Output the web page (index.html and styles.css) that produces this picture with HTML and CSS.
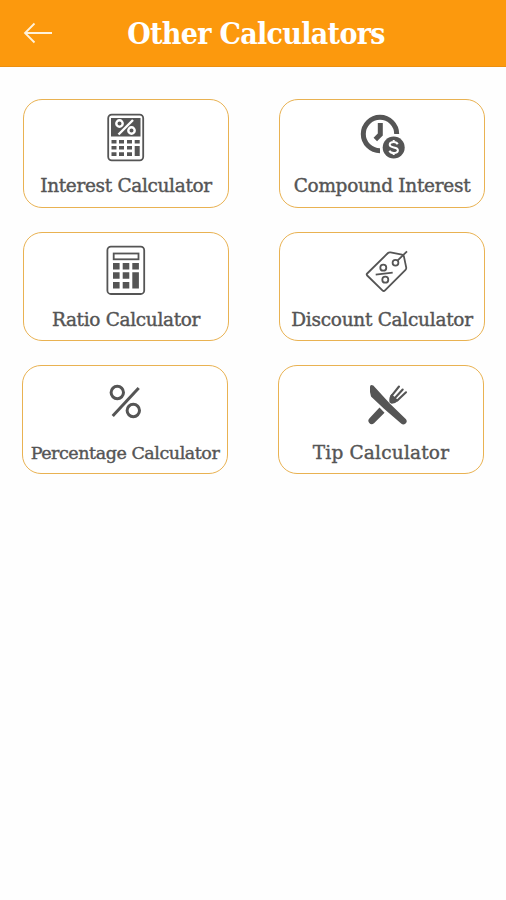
FILE: index.html
```html
<!DOCTYPE html>
<html lang="en">
<head>
  <meta charset="UTF-8">
  <meta name="viewport" content="width=device-width, initial-scale=1.0">
  <title>Other Calculators</title>
  <link rel="stylesheet" href="styles.css">
</head>
<body>
  <header class="header">
    <a href="#" class="back" aria-label="Back">
      <svg width="30" height="22" viewBox="0 0 30 22">
        <path d="M29 11H2M11.500 1.500L2 11l9.500 9.500" />
      </svg>
    </a>
    <h1>Other Calculators</h1>
  </header>

  <main class="grid">
    <a href="#" class="card">
      <svg class="icon" viewBox="0 0 60 60">
        <rect class="line" x="12.200" y="5.700" width="35" height="45.600" rx="3.500" />
        <rect x="15" y="9" width="29.500" height="18.500" />
        <g class="knockout">
          <circle cx="23.500" cy="14.500" r="3.200" />
          <circle cx="35.500" cy="21.500" r="3.200" />
          <path d="M37 11L22.500 25.500" />
        </g>
        <path d="M15.500 31h5v3.600h-5zM23 31h5v3.600h-5zM31 31h5v3.600h-5zM38.700 31h5v3.600h-5zM15.500 37h5v3.600h-5zM23 37h5v3.600h-5zM31 37h5v3.600h-5zM15.500 43.300h5v3.600h-5zM23 43.300h5v3.600h-5zM31 43.300h5v3.600h-5zM38.700 37h5v9.900h-5z" />
      </svg>
      <span class="label interest">Interest Calculator</span>
    </a>

    <a href="#" class="card">
      <svg class="icon" viewBox="0 0 60 60">
        <path class="ring" d="M44.700 25A16.700 16.700 0 1 0 28 41.700" />
        <path class="hand" d="M28.300 14v11.500L23.300 30.500" />
        <circle cx="41.700" cy="38.500" r="11" />
        <path class="dollar" d="M45.700 35.200c-.8-1.600-2.300-2.100-4-2.100-2.400 0-4 1-4 2.700 0 3.900 8.200 1.500 8.200 5.400 0 1.800-1.800 2.800-4.100 2.800-2 0-3.600-.7-4.400-2.300M41.700 31v2.500M41.700 43.500V46" />
      </svg>
      <span class="label compound">Compound Interest</span>
    </a>

    <a href="#" class="card">
      <svg class="icon" viewBox="0 0 60 60">
        <rect class="line" x="11.400" y="4.700" width="36.800" height="47.300" rx="3.500" />
        <rect class="line" x="17.700" y="11.500" width="24.800" height="5.800" />
        <path d="M17 21h6.600v6.400H17zM26.700 21h6.600v6.400h-6.600zM36.300 21h6.600v6.400h-6.600zM17 30.300h6.600v6.400H17zM26.700 30.300h6.600v6.400h-6.600zM17 40h6.600v6.400H17zM26.700 40h6.600v6.400h-6.600zM36.300 30.300h6.600v16.100h-6.600z" />
      </svg>
      <span class="label ratio">Ratio Calculator</span>
    </a>

    <a href="#" class="card">
      <svg class="icon" viewBox="0 0 60 60">
        <g class="line">
          <path d="M15.200 31.500L36 11q1-.9 2.500-.6l11.500 2.200q1.500.3 1.900 1.800l2.300 11q.3 1.500-.7 2.500L33 48.300q-1.300 1.300-2.600 0L15.200 33.500q-1-1 0-2z" />
          <circle cx="43.500" cy="20.700" r="2.900" />
          <path d="M45.500 18.700L55 9.300M23.700 32.700l17-2" />
          <circle cx="31.300" cy="25.700" r="3" />
          <circle cx="33.300" cy="37.700" r="3" />
        </g>
      </svg>
      <span class="label discount">Discount Calculator</span>
    </a>

    <a href="#" class="card card-last">
      <svg class="icon" viewBox="0 0 60 60">
        <g class="percent">
          <circle cx="22.300" cy="17.500" r="6.200" />
          <circle cx="38.300" cy="35.500" r="6.200" />
          <path d="M43.700 13L17.700 41" />
        </g>
      </svg>
      <span class="label percentage">Percentage Calculator</span>
    </a>

    <a href="#" class="card card-last">
      <svg class="icon" viewBox="0 0 60 60">
        <!-- knife -->
        <path d="M19 12q0-3 3.300-1.500L39 28.800l16 15.400q1.700 2.300-.4 4.200-2.100 1.900-4.200.4L33 33.800l-13-12.300q-1.500-4-1-9.500z" />
        <!-- fork -->
        <path d="M28.500 32.500l5 5.200-10.500 10.600q-2.600 2-4.700-.3-2.100-2.500.2-4.800z" />
        <path d="M38.500 27.500q-1-5.500 2-8.500l7 6.500q-3.500 3.500-7 3.300z" />
        <path class="tines" d="M40.500 20.800L48 11.500M43.700 23.200l8-8.700M46.300 25.500l8.700-8.200" />
      </svg>
      <span class="label tip">Tip Calculator</span>
    </a>
  </main>
</body>
</html>
```
FILE: styles.css
```css
/* Base styles */
* {
  box-sizing: border-box;
}

body {
  margin: 0;
  min-height: 100vh;
  background-color: #fefefe;
  color: #555;
  font-family: "DejaVu Serif", serif;
}

/* Header */
.header {
  display: grid;
  grid-template-columns: 104px 1fr 98px;
  align-items: center;
  height: 67px;
  background-color: #fc990d;
  border-bottom: 1px solid #ec8f10;
  color: #fff;
}

.header h1 {
  margin: 0;
  padding-top: 2px;
  text-align: center;
  font-family: "DejaVu Serif Condensed", "DejaVu Serif", serif;
  font-stretch: condensed;
  font-size: 30px;
  font-weight: 700;
  line-height: 40px;
  letter-spacing: -0.7px;
  white-space: nowrap;
}

.back {
  display: flex;
  padding-left: 23px;
}

.back svg {
  fill: none;
  stroke: #fff3dc;
  stroke-width: 1.8;
}

/* Calculator grid */
.grid {
  display: grid;
  grid-template-columns: 206px 206px;
  grid-auto-rows: 109px;
  gap: 24px 50px;
  padding: 32px 0 0 23px;
}

.card {
  display: flex;
  flex-direction: column;
  align-items: center;
  padding-top: 9px;
  border: 1.5px solid #e9b252;
  border-radius: 19px;
  background-color: #fff;
  color: inherit;
  text-decoration: none;
}

.card-last {
  margin: 0 1px 0 -1px;
}

.label {
  font-size: 18.500px;
  line-height: 26px;
  margin-top: 5px;
  white-space: nowrap;
  -webkit-text-stroke: 0.4px #555;
}

.interest { letter-spacing: -0.33px; margin-top: 4px; }
.compound { letter-spacing: -0.3px; margin-top: 4px; }
.ratio { letter-spacing: -0.33px; }
.discount { letter-spacing: -0.27px; }
.percentage { letter-spacing: -0.45px; font-size: 17.500px; }
.tip { letter-spacing: 0.2px; }

/* Icons */
.icon {
  width: 60px;
  height: 60px;
  flex: none;
  fill: #555;
}

.line {
  fill: none;
  stroke: #555;
  stroke-width: 1.8;
}

.knockout {
  fill: none;
  stroke: #fff;
  stroke-width: 2.4;
}

.ring,
.hand {
  fill: none;
  stroke: #555;
  stroke-width: 5;
}

.dollar {
  fill: none;
  stroke: #fff;
  stroke-width: 2;
}

.percent {
  fill: none;
  stroke: #555;
  stroke-width: 3;
}

.tines {
  fill: none;
  stroke: #555;
  stroke-width: 2.1;
  stroke-linecap: round;
}
```
